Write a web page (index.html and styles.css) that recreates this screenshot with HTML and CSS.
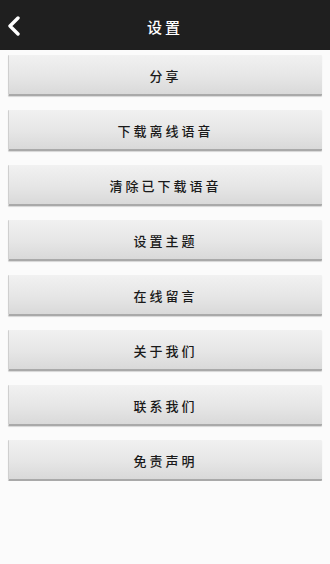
FILE: index.html
```html
<!DOCTYPE html>
<html lang="zh">
<head>
    <meta charset="UTF-8">
    <meta name="viewport" content="width=device-width, initial-scale=1.0">
    <title>设置</title>
    <link rel="stylesheet" href="styles.css">
</head>
<body>

    <header class="topbar">
        <a class="back" href="#">
            <svg width="14" height="20" viewBox="0 0 14 20">
                <path d="M11 2 L3 10 L11 18" fill="none" stroke="#fff" stroke-width="3.4" stroke-linecap="round" stroke-linejoin="round"/>
            </svg>
        </a>
        <h1>设置</h1>
    </header>

    <!-- Settings list -->
    <div class="menu">
        <button class="menu-btn">分享</button>
        <button class="menu-btn">下载离线语音</button>
        <button class="menu-btn">清除已下载语音</button>
        <button class="menu-btn">设置主题</button>
        <button class="menu-btn">在线留言</button>
        <button class="menu-btn">关于我们</button>
        <button class="menu-btn">联系我们</button>
        <button class="menu-btn">免责声明</button>
    </div>

</body>
</html>
```

FILE: styles.css
```css
body {
    font-family: "Noto Sans CJK SC", "Liberation Sans", sans-serif;
    margin: 0;
    padding: 0;
    background-color: #fbfbfb;
}

.topbar {
    position: relative;
    height: 50px;
    background-color: #1f1f1f;
    display: flex;
    align-items: center;
    justify-content: center;
}

.topbar h1 {
    margin: 0;
    padding-top: 3px;
    color: #fff;
    font-size: 15px;
    font-weight: 500;
    letter-spacing: 3px;
}

.back {
    position: absolute;
    left: 7px;
    top: 16px;
    display: block;
    line-height: 0;
}

.menu {
    display: flex;
    flex-direction: column;
    gap: 14px;
    padding: 5px 8px 0;
}

.menu-btn {
    height: 41px;
    width: 100%;
    border: none;
    border-left: 1px solid #cfcfcf;
    border-bottom: 2px solid #a9a9a9;
    border-radius: 1px;
    background: linear-gradient(to bottom, #f1f1f1 0%, #e6e6e6 55%, #d9d9d9 100%);
    box-shadow: 0 1px 1px rgba(0, 0, 0, 0.15);
    font-family: "Noto Sans CJK SC", sans-serif;
    font-size: 13px;
    font-weight: 500;
    color: #1a1a1a;
    letter-spacing: 3px;
    padding: 2px 0 0;
    cursor: pointer;
}
```
